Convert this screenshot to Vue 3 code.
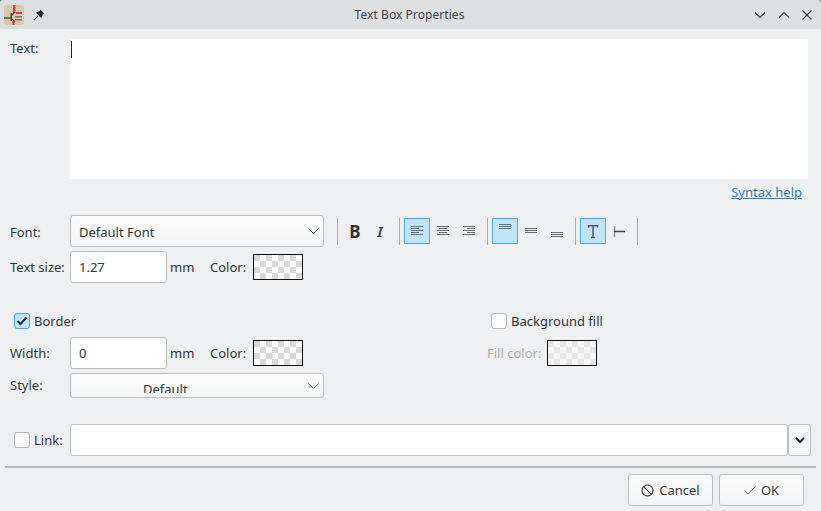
<script setup>
const aligns = [
  { on: true, w: [12, 8, 12, 8, 12], a: 'l' },
  { on: false, w: [12, 8, 12, 8, 12], a: 'c' },
  { on: false, w: [12, 8, 12, 8, 12], a: 'r' },
]
function alignX(a, w) {
  if (a === 'l') return 7
  if (a === 'c') return 7 + (12 - w) / 2
  return 7 + 12 - w
}
const valigns = [
  { on: true, ys: [6, 8, 10] },
  { on: false, ys: [10, 12, 14] },
  { on: false, ys: [14, 16, 18] },
]
</script>

<template>
  <div class="dialog">
    <header class="titlebar">
      <div class="title-left">
        <svg class="logo" width="20" height="20" viewBox="0 0 20 20">
          <rect x="0" y="0" width="20" height="20" rx="2.5" fill="#d9c9a8" />
          <rect x="9" y="0" width="2.4" height="8" fill="#e0305a" />
          <rect x="12" y="7" width="6" height="2" fill="#e0305a" />
          <rect x="6.5" y="8" width="1.5" height="8" fill="#45453e" />
          <rect x="0" y="12.3" width="7" height="1.4" fill="#45453e" />
          <path d="M8 10 L11 7 M8 14 L11 17" stroke="#45453e" stroke-width="1.2" fill="none" />
          <rect x="8.5" y="16" width="2" height="4" fill="#e0305a" />
          <rect x="11" y="11" width="7" height="1.5" fill="#7a7466" />
          <rect x="11" y="14" width="7" height="1.5" fill="#7a7466" />
        </svg>
        <svg class="pin" width="12" height="12" viewBox="0 0 14 14">
          <path d="M8.5 0.5 L13.5 5.5 L11.5 6.5 L9.5 10.5 L3.5 4.5 L7.5 2.5 Z" fill="#2c2c2c" />
          <path d="M6 8 L1 13" stroke="#2c2c2c" stroke-width="1.4" />
        </svg>
      </div>
      <div class="title-text">Text Box Properties</div>
      <div class="title-controls">
        <svg width="12" height="8" viewBox="0 0 12 8"><path d="M1 1.5 L6 6.5 L11 1.5" class="ctl" /></svg>
        <svg width="12" height="8" viewBox="0 0 12 8"><path d="M1 6.5 L6 1.5 L11 6.5" class="ctl" /></svg>
        <svg width="10" height="10" viewBox="0 0 10 10"><path d="M0.5 0.5 L9.5 9.5 M9.5 0.5 L0.5 9.5" class="ctl" /></svg>
      </div>
    </header>

    <main class="body">
      <section class="text-row">
        <label class="side-label">Text:</label>
        <div class="textarea"><span class="caret"></span></div>
      </section>

      <div class="syntax-row"><a class="link">Syntax help</a></div>

      <section class="row font-row">
        <label class="side-label nudge">Font:</label>
        <div class="combo font-combo nudge">
          <span>Default Font</span>
          <svg class="chev" width="11" height="6" viewBox="0 0 11 6"><path d="M0.5 0.5 L5.5 5.5 L10.5 0.5" /></svg>
        </div>
        <div class="toolbar">
          <span class="sep first"></span>
          <span class="tool"><b class="bold">B</b></span>
          <span class="tool"><i class="ital">I</i></span>
          <span class="sep"></span>
          <span v-for="(t, i) in aligns" :key="i" class="tool" :class="{ on: t.on }">
            <svg width="26" height="26" viewBox="0 0 26 26">
              <rect v-for="(w, j) in t.w" :key="j" :x="alignX(t.a, w)" :y="8 + j * 2" :width="w" height="1" fill="#6b6e71" />
            </svg>
          </span>
          <span class="sep"></span>
          <span v-for="(t, i) in valigns" :key="'v' + i" class="tool" :class="{ on: t.on }">
            <svg width="26" height="26" viewBox="0 0 26 26">
              <rect v-for="y in t.ys" :key="y" x="7" :y="y" width="12" height="1" fill="#6b6e71" />
            </svg>
          </span>
          <span class="sep"></span>
          <span class="tool on">
            <svg width="26" height="26" viewBox="0 0 26 26">
              <path d="M8.5 9.5 V7.7 H17.5 V9.5 M13 7.7 V19 M11 19.4 H15" stroke="#52585e" stroke-width="1.5" fill="none" />
            </svg>
          </span>
          <span class="tool">
            <svg width="26" height="26" viewBox="0 0 26 26">
              <path d="M8.5 8 V19" stroke="#8a8c8e" stroke-width="1.5" />
              <path d="M8 13.5 H19" stroke="#404346" stroke-width="1.5" />
            </svg>
          </span>
          <span class="sep"></span>
        </div>
      </section>

      <section class="row size-row">
        <label class="side-label">Text size:</label>
        <div class="input short">1.27</div>
        <span class="unit">mm</span>
        <span class="color-label">Color:</span>
        <span class="swatch"></span>
      </section>

      <section class="border-row">
        <div class="check-wrap">
          <span class="check checked">
            <svg width="12" height="10" viewBox="0 0 12 10"><path d="M1.5 5 L4.5 8 L10.5 1.5" fill="none" stroke="#2b3035" stroke-width="2" /></svg>
          </span>
          <span>Border</span>
        </div>
        <div class="check-wrap bg-check">
          <span class="check"></span>
          <span>Background fill</span>
        </div>
      </section>

      <section class="row width-row">
        <label class="side-label">Width:</label>
        <div class="input short">0</div>
        <span class="unit">mm</span>
        <span class="color-label">Color:</span>
        <span class="swatch"></span>
        <span class="fill-label">Fill color:</span>
        <span class="swatch faded"></span>
      </section>

      <section class="row style-row">
        <label class="side-label style-label">Style:</label>
        <div class="combo style-combo">
          <span class="clipped">Default</span>
          <svg class="chev" width="11" height="6" viewBox="0 0 11 6"><path d="M0.5 0.5 L5.5 5.5 L10.5 0.5" /></svg>
        </div>
      </section>

      <section class="row link-row">
        <div class="check-wrap link-check">
          <span class="check"></span>
          <span>Link:</span>
        </div>
        <div class="input link-input"></div>
        <div class="drop-btn">
          <svg width="10" height="7" viewBox="0 0 10 7"><path d="M1 1 L5 5 L9 1" fill="none" stroke="#222" stroke-width="2" /></svg>
        </div>
      </section>

      <hr class="divider" />

      <footer class="buttons">
        <button class="btn">
          <svg width="13" height="13" viewBox="0 0 13 13"><circle cx="6.5" cy="6.5" r="5.5" fill="none" stroke="#333" stroke-width="1.1" /><path d="M2.7 2.7 L10.3 10.3" stroke="#333" stroke-width="1.1" /></svg>
          Cancel
        </button>
        <button class="btn">
          <svg width="12" height="9" viewBox="0 0 12 9"><path d="M0.5 4.5 L4 8 L11.5 0.5" fill="none" stroke="#555" stroke-width="0.9" /></svg>
          OK
        </button>
      </footer>
    </main>
  </div>
</template>

<style scoped>
.dialog {
  width: 821px;
  height: 511px;
  background: #eff0f2;
  font-family: "Noto Sans", sans-serif;
  font-size: 13px;
  color: #31363b;
  overflow: hidden;
  display: flex;
  flex-direction: column;
  border-radius: 4px 4px 0 0;
}
.titlebar {
  height: 29px;
  flex: none;
  background: #dedfe0;
  display: grid;
  grid-template-columns: 1fr auto 1fr;
  align-items: center;
  font-size: 12px;
}
.title-left {
  display: flex;
  align-items: center;
  padding-left: 4px;
  gap: 9px;
}
.title-text { color: #3c4046; letter-spacing: 0.06px; transform: translateX(-1px); }
.title-controls {
  display: flex;
  justify-content: flex-end;
  align-items: center;
  gap: 12px;
  padding-right: 9px;
}
.ctl { fill: none; stroke: #3a3e43; stroke-width: 1.2; }
.body {
  flex: 1;
  position: relative;
  padding: 10px 0 0 10px;
}
.side-label { width: 60px; flex: none; white-space: nowrap; }
.nudge { padding-top: 2px; box-sizing: border-box; }
.style-label { padding-bottom: 2px; box-sizing: border-box; }
.text-row { display: flex; }
.textarea {
  width: 738px;
  height: 140px;
  background: #fff;
  padding: 2px 0 0 1px;
  box-sizing: border-box;
}
.caret { display: block; width: 1px; height: 17px; background: #222; }
.syntax-row {
  width: 792px;
  height: 36px;
  padding-top: 4px;
  box-sizing: border-box;
  text-align: right;
}
.link { color: #2980b9; text-decoration: underline; }
.row { display: flex; align-items: center; }
.font-row { height: 32px; }
.combo {
  height: 100%;
  box-sizing: border-box;
  border: 1px solid #bcbebf;
  border-radius: 3px;
  background: linear-gradient(#fcfcfc, #f4f5f6);
  position: relative;
  display: flex;
  align-items: center;
}
.font-combo { width: 254px; padding-left: 8px; }
.chev { position: absolute; right: 4px; top: 50%; margin-top: -3px; fill: none; stroke: #6b6e71; stroke-width: 1; }
.toolbar { display: flex; align-items: center; margin-left: 13px; }
.sep { width: 1px; height: 27px; background: #a9abad; margin: 1px 4px 0 5px; }
.sep.first { margin-left: 0; }
.tool {
  width: 26px;
  height: 26px;
  box-sizing: border-box;
  display: flex;
  align-items: center;
  justify-content: center;
}
.tool svg { flex: none; margin: -1px; }
.tool.on { background: #c2e4f8; outline: 1px solid #3daee9; outline-offset: -1px; }
.bold { font-size: 17px; line-height: 1; color: #333; font-family: "Noto Sans", sans-serif; }
.ital { font-size: 15px; font-weight: 600; line-height: 1; color: #444; margin-left: -2px; }
.size-row { height: 32px; margin-top: 4px; }
.input {
  height: 32px;
  box-sizing: border-box;
  background: #fff;
  border: 1px solid #bcbebf;
  border-radius: 3px;
  padding-left: 8px;
  display: flex;
  align-items: center;
}
.short { width: 97px; }
.unit { margin-left: 3px; width: 40px; flex: none; }
.color-label { width: 43px; flex: none; }
.swatch {
  width: 50px;
  height: 26px;
  flex: none;
  box-sizing: border-box;
  border: 1px solid #111;
  background: conic-gradient(#d8d8d8 25%, #fff 0 50%, #d8d8d8 0 75%, #fff 0) 6px 0 / 12px 12px;
}
.swatch.faded {
  background: conic-gradient(#e6e6e6 25%, #f7f7f7 0 50%, #e6e6e6 0 75%, #f7f7f7 0) 6px 0 / 12px 12px;
}
.border-row {
  height: 16px;
  margin-top: 30px;
  display: flex;
  align-items: center;
}
.check-wrap { display: flex; align-items: center; gap: 4px; margin-left: 4px; }
.bg-check { margin-left: 0; position: absolute; left: 491px; }
.check {
  width: 16px;
  height: 16px;
  box-sizing: border-box;
  border: 1px solid #b4b6b8;
  border-radius: 3px;
  background: #fcfcfc;
  display: flex;
  align-items: center;
  justify-content: center;
}
.check.checked { background: #c2e4f8; border-color: #3daee9; }
.width-row { height: 32px; margin-top: 8px; position: relative; }
.fill-label { margin-left: 184px; width: 60px; flex: none; color: #a9abad; }
.style-row { height: 25px; margin-top: 4px; }
.style-combo { width: 254px; height: 25px; overflow: hidden; padding-left: 72px; align-items: flex-start; }
.clipped { display: block; height: 13px; margin-top: 6px; line-height: 18px; overflow: hidden; }
.link-row { height: 32px; margin-top: 26px; }
.link-check { width: 56px; flex: none; }
.link-input { width: 718px; }
.drop-btn {
  width: 23px;
  height: 32px;
  box-sizing: border-box;
  border: 1px solid #bcbebf;
  border-radius: 3px;
  background: #f6f7f8;
  display: flex;
  align-items: center;
  justify-content: center;
}
.divider {
  width: 811px;
  height: 2px;
  margin: 10px 0 0 -5px;
  border: none;
  background: #bcbdbf;
}
.buttons {
  display: flex;
  gap: 6px;
  margin: 6px 0 0 618px;
}
.btn {
  width: 85px;
  height: 32px;
  border: 1px solid #bcbebf;
  border-radius: 3px;
  background: linear-gradient(#fcfcfc, #f4f5f6);
  font: inherit;
  color: inherit;
  padding: 0;
  display: flex;
  align-items: center;
  justify-content: center;
  gap: 5px;
}
</style>

<style>
html, body { background: #77797c; }
</style>
